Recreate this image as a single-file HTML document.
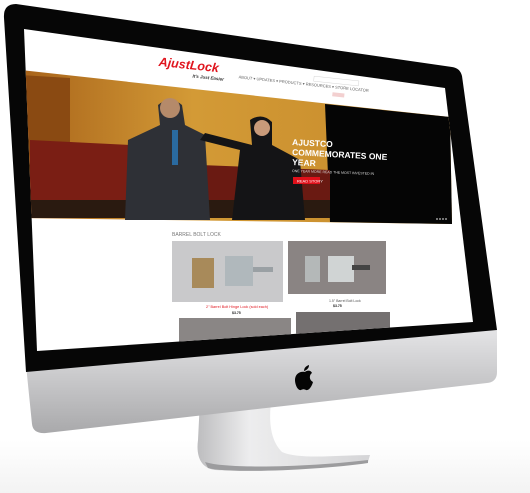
<!DOCTYPE html>
<html><head><meta charset="utf-8"><style>
html,body{margin:0;padding:0;background:#fff;width:530px;height:493px;overflow:hidden}
svg{display:block}
text{font-family:"Liberation Sans",sans-serif}
</style></head><body>
<svg width="530" height="493" viewBox="0 0 530 493">
<defs>
<linearGradient id="chin" x1="0" y1="0" x2="0" y2="1">
<stop offset="0" stop-color="#e4e4e6"/><stop offset="1" stop-color="#a9a9ab"/></linearGradient>
<linearGradient id="stand" x1="0" y1="0" x2="1" y2="0">
<stop offset="0" stop-color="#bdbdbf"/><stop offset="0.3" stop-color="#ededee"/><stop offset="1" stop-color="#d5d5d7"/></linearGradient>
<linearGradient id="wall" x1="0" y1="0" x2="1" y2="0">
<stop offset="0" stop-color="#a8631a"/><stop offset="0.4" stop-color="#d39a36"/><stop offset="1" stop-color="#c68a2a"/></linearGradient>
<linearGradient id="floor" x1="0" y1="0" x2="0" y2="1">
<stop offset="0" stop-color="#fff"/><stop offset="1" stop-color="#f3f3f3"/></linearGradient>
<clipPath id="scr"><polygon points="24,29 445,88 473,322 37,351"/></clipPath>
</defs>
<rect x="0" y="440" width="530" height="53" fill="url(#floor)"/>
<path d="M200,400 L272,395 C268,420 270,440 282,452 C300,460 340,455 370,455 L368,462 C330,468 250,472 215,470 C200,468 196,455 198,440 Z" fill="url(#stand)"/>
<path d="M205,462 C230,470 320,466 368,460 L368,463 C320,470 230,474 208,468 Z" fill="#9c9c9e"/>
<path d="M26,365 L497,330 L497,372 Q497,382 487,383 L46,433 Q33,434 32,424 Z" fill="url(#chin)"/>
<path d="M16,4 L452,67 Q460,68 462,76 L497,330 L26,372 L4,18 Q3,4 16,4 Z" fill="#060606"/>
<polygon points="24,29 445,88 473,322 37,351" fill="#fff"/>
<g clip-path="url(#scr)">
  <polygon points="20,70 450,117 452,224 20,218" fill="url(#wall)"/>
  <polygon points="325,104 450,117 452,224 330,222" fill="#050505"/>
  <polygon points="20,75 70,78 70,218 20,218" fill="#8a4a12"/>
  <polygon points="30,140 190,148 200,205 30,205" fill="#7a1e14"/>
  <polygon points="200,165 330,170 330,205 200,205" fill="#6a1a12"/>
  <rect x="20" y="200" width="310" height="18" fill="#2a1a10"/>
  <path d="M158,105 Q170,95 182,105 L185,125 L205,135 L210,220 L125,220 L128,140 L160,125 Z" fill="#2e3036"/>
  <rect x="172" y="130" width="6" height="35" fill="#2a6aa0"/>
  <path d="M250,120 Q262,112 272,122 L272,145 L300,160 L305,220 L232,220 L240,150 L200,140 L205,133 L252,145 Z" fill="#141416"/>
  <circle cx="170" cy="108" r="10" fill="#b58a6a"/>
  <circle cx="262" cy="128" r="8" fill="#c89a7a"/>
  <text x="292" y="145" fill="#fff" font-size="8.5" font-weight="bold" transform="rotate(3 292 145)">AJUSTCO</text>
  <text x="292" y="155" fill="#fff" font-size="8.5" font-weight="bold" transform="rotate(3 292 155)">COMMEMORATES ONE</text>
  <text x="292" y="165" fill="#fff" font-size="8.5" font-weight="bold" transform="rotate(3 292 165)">YEAR</text>
  <text x="292" y="172" fill="#ddd" font-size="3.5" transform="rotate(2 292 172)">ONE YEAR MORE READ THE MOST INVESTED IN</text>
  <rect x="293" y="177" width="27" height="7" fill="#e0101a"/>
  <text x="297" y="182.5" fill="#fff" font-size="4">READ STORY</text>
  <g fill="#999"><circle cx="437" cy="219" r="1"/><circle cx="440" cy="219" r="1"/><circle cx="443" cy="219" r="1"/><circle cx="446" cy="219" r="1"/></g>
  <g transform="rotate(6 160 60)">
    <text x="159" y="66" fill="#e0151e" font-size="12.5" font-weight="bold" font-style="italic">AjustLock</text>
    <text x="194" y="74" fill="#333" font-size="4.5" font-weight="bold" font-style="italic">It's Just Easier</text>
    <text x="240" y="70" fill="#666" font-size="4">ABOUT ▾   UPDATES ▾   PRODUCTS ▾   RESOURCES ▾   STORE LOCATOR</text>
    <rect x="315" y="60" width="45" height="5" fill="none" stroke="#ccc" stroke-width="0.4"/>
    <rect x="335" y="74" width="12" height="4" fill="#f3d0d0"/>
  </g>
  <text x="172" y="236" fill="#777" font-size="5">BARREL BOLT LOCK</text>
  <rect x="172" y="241" width="111" height="61" fill="#c9c9cb"/>
  <rect x="288" y="241" width="98" height="53" fill="#8a8483"/>
  <rect x="192" y="258" width="22" height="30" fill="#a88a5a"/>
  <rect x="225" y="256" width="28" height="30" fill="#b0b8bc"/>
  <rect x="253" y="267" width="20" height="5" fill="#9aa0a4"/>
  <rect x="305" y="256" width="15" height="26" fill="#b4b8b8"/>
  <rect x="328" y="256" width="26" height="26" fill="#d0d4d4"/>
  <rect x="352" y="265" width="18" height="5" fill="#444"/>
  <text x="206" y="308" fill="#e0151e" font-size="3.8">2" Barrel Bolt Hinge Lock (sold each)</text>
  <text x="232" y="314" fill="#222" font-size="3.5" font-weight="bold">$3.75</text>
  <text x="329" y="302" fill="#555" font-size="3.5">1.5" Barrel Bolt Lock</text>
  <text x="333" y="307" fill="#222" font-size="3.5" font-weight="bold">$3.75</text>
  <rect x="179" y="318" width="112" height="40" fill="#8a8685"/>
  <rect x="296" y="312" width="94" height="40" fill="#747070"/>
</g>
<g transform="translate(295,364)" fill="#050505">
  <path d="M10,8 C12,6 16,6 17,9 C14,11 14,16 18,18 C17,22 14,27 11,26 C9,25 8,25 6,26 C3,27 0,21 0,16 C0,10 5,7 10,8 Z"/>
  <path d="M9,7 C9,4 11,2 14,1 C14,4 12,6 9,7 Z"/>
</g>
</svg>
</body></html>
